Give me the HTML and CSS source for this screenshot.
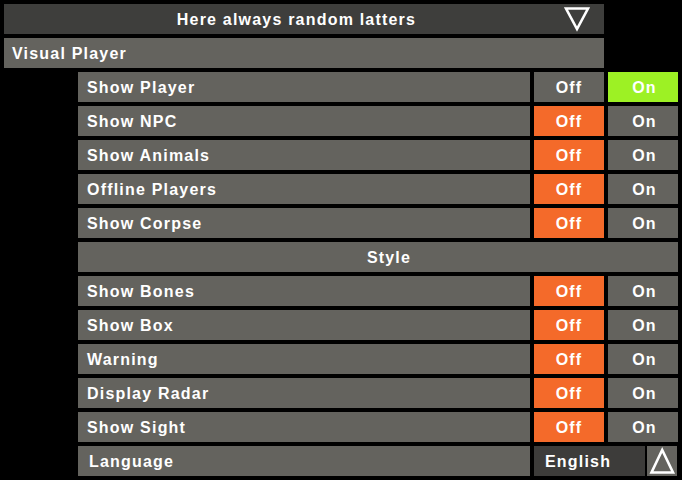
FILE: index.html
```html
<!DOCTYPE html>
<html>
<head>
<meta charset="utf-8">
<link rel="stylesheet" href="styles.css">
</head>
<body>
<div class="panel">
  <div class="header">
    <span class="header-title">Here always random latters</span>
    <svg class="header-arrow" width="26" height="26" viewBox="0 0 26 26"><polygon points="2,2.5 24,2.5 13,23" fill="none" stroke="#fff" stroke-width="2.6" stroke-linejoin="miter"/></svg>
  </div>
  <div class="section">Visual Player</div>

  <div class="row"><div class="label">Show Player</div><div class="btn">Off</div><div class="btn on">On</div></div>
  <div class="row"><div class="label">Show NPC</div><div class="btn off">Off</div><div class="btn">On</div></div>
  <div class="row"><div class="label">Show Animals</div><div class="btn off">Off</div><div class="btn">On</div></div>
  <div class="row"><div class="label">Offline Players</div><div class="btn off">Off</div><div class="btn">On</div></div>
  <div class="row"><div class="label">Show Corpse</div><div class="btn off">Off</div><div class="btn">On</div></div>

  <div class="subhead">Style</div>

  <div class="row"><div class="label">Show Bones</div><div class="btn off">Off</div><div class="btn">On</div></div>
  <div class="row"><div class="label">Show Box</div><div class="btn off">Off</div><div class="btn">On</div></div>
  <div class="row"><div class="label">Warning</div><div class="btn off">Off</div><div class="btn">On</div></div>
  <div class="row"><div class="label">Display Radar</div><div class="btn off">Off</div><div class="btn">On</div></div>
  <div class="row"><div class="label">Show Sight</div><div class="btn off">Off</div><div class="btn">On</div></div>

  <div class="lang-row">
    <div class="label lang-label">Language</div>
    <div class="lang-value">English</div>
    <div class="lang-btn">
      <svg width="28" height="30" viewBox="0 0 28 30"><polygon points="3.5,26.5 25,26.5 14.2,4" fill="none" stroke="#fff" stroke-width="2.6"/></svg>
    </div>
  </div>
</div>
</body>
</html>
```

FILE: styles.css
```css
html, body {
  margin: 0;
  padding: 0;
  background: #000;
}

body {
  width: 682px;
  height: 480px;
  overflow: hidden;
  font-family: "Liberation Sans", Arial, sans-serif;
  font-weight: bold;
  font-size: 16px;
  letter-spacing: 1.2px;
  color: #fff;
}

.panel {
  display: flex;
  flex-direction: column;
  gap: 4px;
  padding: 4px;
}

.header {
  position: relative;
  width: 600px;
  height: 30px;
  background: #3e3e3c;
  display: flex;
  align-items: center;
  justify-content: center;
  padding: 2px 15px 0 0;
  box-sizing: border-box;
}

.header-arrow {
  position: absolute;
  left: 560px;
  top: 2px;
}

.section {
  width: 600px;
  height: 30px;
  background: #64635e;
  display: flex;
  align-items: center;
  padding: 2px 0 0 8px;
  box-sizing: border-box;
}

.row {
  margin-left: 74px;
  display: grid;
  grid-template-columns: 452px 70px 70px;
  column-gap: 4px;
  height: 30px;
}

.label {
  background: #64635e;
  display: flex;
  align-items: center;
  padding: 2px 0 0 9px;
}

.btn {
  background: #64635e;
  display: flex;
  align-items: center;
  justify-content: center;
  padding-top: 2px;
}

.btn.off {
  background: #f46a2a;
}

.btn.on {
  background: #9df124;
}

.row .btn:last-child {
  padding-left: 3px;
}

.subhead {
  margin-left: 74px;
  width: 600px;
  height: 30px;
  background: #64635e;
  display: flex;
  align-items: center;
  justify-content: center;
  padding: 2px 0 0 22px;
  box-sizing: border-box;
}

.lang-row {
  margin-left: 74px;
  display: flex;
  height: 30px;
}

.lang-label {
  width: 452px;
  box-sizing: border-box;
  padding-left: 11px;
  margin-right: 4px;
}

.lang-value {
  width: 111px;
  background: #3d3c3a;
  display: flex;
  align-items: center;
  padding: 1px 0 0 11px;
  box-sizing: border-box;
  margin-right: 2px;
}

.lang-btn {
  width: 30px;
  background: #64635e;
  display: flex;
  align-items: center;
  justify-content: center;
}

.lang-btn svg {
  display: block;
}
```
